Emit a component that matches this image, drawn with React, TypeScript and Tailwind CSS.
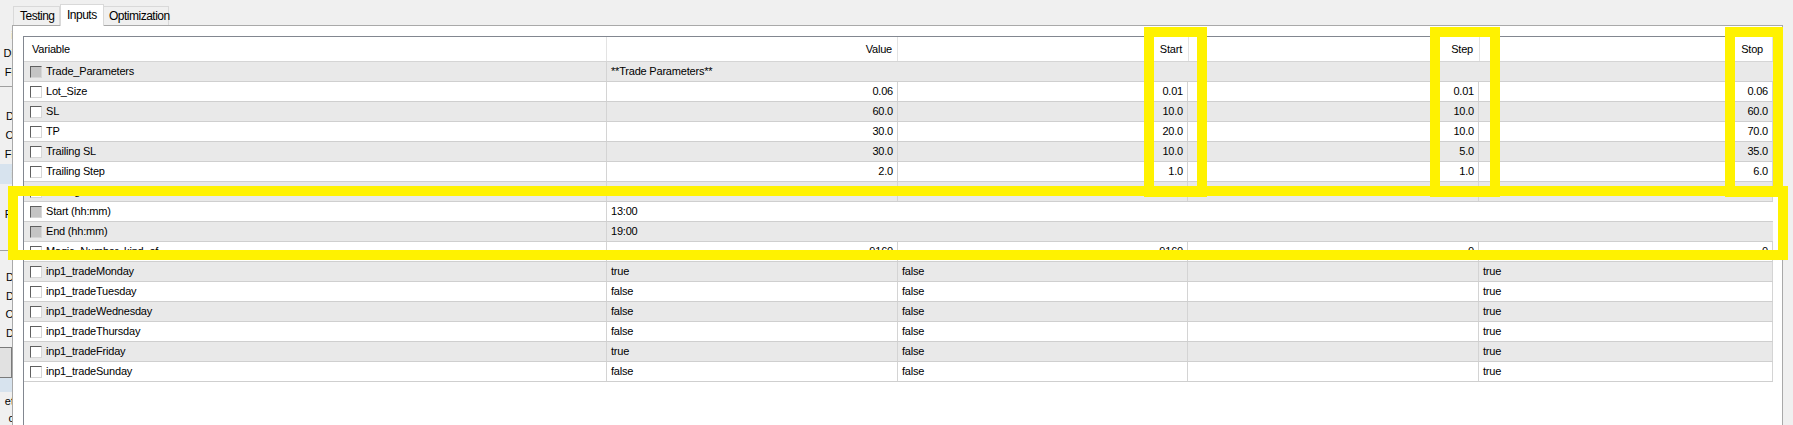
import React from "react";

type Kind = "group" | "num" | "text" | "bool";

interface Param {
  name: string;
  kind: Kind;
  locked?: boolean;
  value?: string;
  start?: string;
  step?: string;
  stop?: string;
}

const params: Param[] = [
  { name: "Trade_Parameters", kind: "group", locked: true, value: "**Trade Parameters**" },
  { name: "Lot_Size", kind: "num", value: "0.06", start: "0.01", step: "0.01", stop: "0.06" },
  { name: "SL", kind: "num", value: "60.0", start: "10.0", step: "10.0", stop: "60.0" },
  { name: "TP", kind: "num", value: "30.0", start: "20.0", step: "10.0", stop: "70.0" },
  { name: "Trailing SL", kind: "num", value: "30.0", start: "10.0", step: "5.0", stop: "35.0" },
  { name: "Trailing Step", kind: "num", value: "2.0", start: "1.0", step: "1.0", stop: "6.0" },
  { name: "Trailing Start", kind: "num", value: "10.0", start: "5.0", step: "5.0", stop: "20.0" },
  { name: "Start (hh:mm)", kind: "text", locked: true, value: "13:00" },
  { name: "End (hh:mm)", kind: "text", locked: true, value: "19:00" },
  { name: "Magic_Number_kind_of", kind: "num", value: "9160", start: "9160", step: "0", stop: "0" },
  { name: "inp1_tradeMonday", kind: "bool", value: "true", start: "false", step: "", stop: "true" },
  { name: "inp1_tradeTuesday", kind: "bool", value: "false", start: "false", step: "", stop: "true" },
  { name: "inp1_tradeWednesday", kind: "bool", value: "false", start: "false", step: "", stop: "true" },
  { name: "inp1_tradeThursday", kind: "bool", value: "false", start: "false", step: "", stop: "true" },
  { name: "inp1_tradeFriday", kind: "bool", value: "true", start: "false", step: "", stop: "true" },
  { name: "inp1_tradeSunday", kind: "bool", value: "false", start: "false", step: "", stop: "true" },
];

// clipped leftovers of the panel that sits to the left of the tab control
const strip = [
  { h: "h-[26px]", t: "" },
  { h: "h-[18px]", t: "i" },
  { h: "h-[19px]", t: "Di" },
  { h: "h-[19px]", t: "Fi" },
  { h: "h-[5px]", t: "", line: true },
  { h: "h-[19px]", t: "" },
  { h: "h-[20px]", t: "D" },
  { h: "h-[18px]", t: "O" },
  { h: "h-[20px]", t: "Fi" },
  { h: "h-[20px]", t: "i", sel: true },
  { h: "h-[20px]", t: "i" },
  { h: "h-[20px]", t: "Fi" },
  { h: "h-[20px]", t: "i" },
  { h: "h-[7px]", t: "", line: true },
  { h: "h-[17px]", t: "" },
  { h: "h-[19px]", t: "D" },
  { h: "h-[18px]", t: "D" },
  { h: "h-[18px]", t: "O" },
  { h: "h-[20px]", t: "D" },
  { h: "h-[4px]", t: "" },
  { h: "h-[31px]", t: "", box: true },
  { h: "h-[14px]", t: "", sel: true },
  { h: "h-[18px]", t: "et" },
  { h: "h-[16px]", t: "c" },
];

function LeftStrip() {
  return (
    <div className="w-[12px] shrink-0 flex flex-col overflow-hidden bg-[#f0f0f0] text-[11px] text-black">
      {strip.map((s, i) => (
        <div
          key={i}
          className={`${s.h} shrink-0 flex items-center justify-end whitespace-nowrap overflow-hidden ${
            s.line ? "border-b border-[#a0a0a0]" : ""
          } ${s.box ? "border border-l-0 border-[#7a7a7a] bg-[#e1e1e1]" : ""} ${
            s.sel ? "bg-[#d7e3ee] text-[#3b6ea5]" : ""
          }`}
        >
          <span className="mr-[-2px]">{s.t}</span>
        </div>
      ))}
    </div>
  );
}

function CheckBox({ locked }: { locked?: boolean }) {
  return (
    <span
      className={`w-[12px] h-[12px] shrink-0 border border-t-[#5f5f5f] border-l-[#5f5f5f] border-r-[#d6d6d6] border-b-[#d6d6d6] ${
        locked ? "bg-[#c4c4c4]" : "bg-white"
      }`}
    />
  );
}

function Row({ p, idx }: { p: Param; idx: number }) {
  const bg = idx % 2 === 0 ? "bg-[#e9e9e9]" : "bg-white";
  const span = p.kind === "group" || p.kind === "text";
  const align = p.kind === "num" ? "justify-end pr-[4px]" : "justify-start pl-[4px]";

  return (
    <div className={`flex h-[20px] w-[1749px] border-b border-[#cfcfcf] ${bg}`}>
      <div className="w-[583px] shrink-0 flex items-center gap-[4px] pl-[6px] border-r border-[#d4d4d4]">
        <CheckBox locked={p.locked} />
        <span>{p.name}</span>
      </div>
      {span ? (
        <div className="flex-1 flex items-center pl-[4px]">{p.value}</div>
      ) : (
        <>
          <div className={`w-[291px] shrink-0 flex items-center border-r border-[#d4d4d4] ${align}`}>{p.value}</div>
          <div className={`w-[290px] shrink-0 flex items-center border-r border-[#d4d4d4] ${align}`}>{p.start}</div>
          <div className={`w-[291px] shrink-0 flex items-center border-r border-[#d4d4d4] ${align}`}>{p.step}</div>
          <div className={`w-[294px] shrink-0 flex items-center border-r border-[#d4d4d4] ${align}`}>{p.stop}</div>
        </>
      )}
    </div>
  );
}

function Header() {
  return (
    <div className="flex h-[25px] w-[1749px] border-b border-[#d5d5d5] bg-white">
      <div className="w-[583px] shrink-0 flex items-center pl-[8px] border-r border-[#e3e3e3]">Variable</div>
      <div className="w-[291px] shrink-0 flex items-center justify-end pr-[5px] border-r border-[#e3e3e3]">Value</div>
      <div className="w-[291px] shrink-0 flex items-center justify-end pr-[6px] border-r border-[#e3e3e3]">Start</div>
      <div className="w-[291px] shrink-0 flex items-center justify-end pr-[6px] border-r border-[#e3e3e3]">Step</div>
      <div className="w-[293px] shrink-0 flex items-center justify-end pr-[9px] border-r border-[#e3e3e3]">Stop</div>
    </div>
  );
}

function Tabs() {
  return (
    <div className="h-[25px] flex items-end pl-[1px] text-[12px] tracking-[-0.5px]">
      <div className="h-[19px] w-[47px] flex items-center pl-[6px] border border-b-0 border-[#d9d9d9] bg-[#f0f0f0]">
        Testing
      </div>
      <div className="relative z-10 mb-[-1px] h-[22px] w-[44px] flex items-center pl-[6px] pb-[2px] border border-b-0 border-[#d9d9d9] bg-white">
        Inputs
      </div>
      <div className="h-[19px] w-[65px] flex items-center pl-[5px] border border-b-0 border-l-0 border-[#d9d9d9] bg-[#f0f0f0]">
        Optimization
      </div>
    </div>
  );
}

export default function App() {
  return (
    <div className="relative w-[1793px] h-[425px] flex overflow-hidden bg-[#f0f0f0] text-[11px] text-black font-['Liberation_Sans',Arial,sans-serif]">
      <LeftStrip />

      <div className="w-[1771px] shrink-0 flex flex-col">
        <Tabs />
        <div className="flex-1 bg-white border border-b-0 border-[#a9a9a9] pl-[10px] pt-[10px]">
          <div className="h-full border-l border-t border-[#828790] bg-white tracking-[-0.2px]">
            <Header />
            {params.map((p, i) => (
              <Row key={p.name} p={p} idx={i} />
            ))}
          </div>
        </div>
      </div>

      <div className="flex-1 bg-[#f0f0f0]" />

      {/* yellow annotation boxes drawn over the grid */}
      <div className="absolute left-[1144px] top-[27px] w-[63px] h-[170px] border-[10px] border-[#fff200]" />
      <div className="absolute left-[1430px] top-[27px] w-[70px] h-[170px] border-[10px] border-[#fff200]" />
      <div className="absolute left-[1725px] top-[27px] w-[58px] h-[170px] border-[10px] border-[#fff200]" />
      <div className="absolute left-[8px] top-[186px] w-[1780px] h-[74px] border-[10px] border-[#fff200]" />
    </div>
  );
}
